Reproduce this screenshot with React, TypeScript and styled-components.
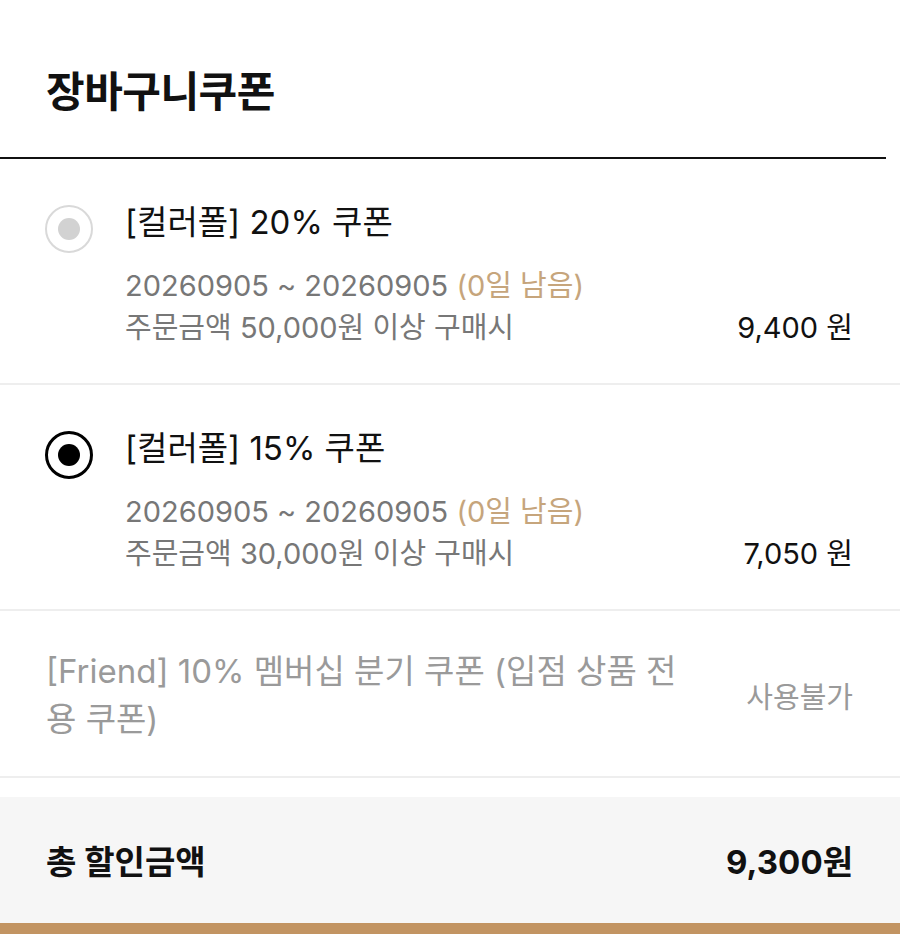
import React from 'react';
import styled, { createGlobalStyle } from 'styled-components';

const GlobalStyle = createGlobalStyle`
    html, body {
        margin: 0;
        padding: 0;
        background: #ffffff;
    }

    body {
        font-family: Inter, 'Noto Sans CJK KR', 'Noto Sans', sans-serif;
        color: #111111;
    }
`;

const Page = styled.div`
    width: 900px;
    height: 934px;
    display: flex;
    flex-direction: column;
    overflow: hidden;
    background: #ffffff;
`;

const Header = styled.header`
    height: 159px;
    display: flex;
    align-items: center;
    padding: 20px 46px 0;
    box-sizing: border-box;
    border-bottom: 2px solid #111111;
    margin-right: 14px;
`;

const Title = styled.h1`
    margin: 0;
    font-family: 'Noto Sans CJK KR', sans-serif;
    font-size: 42px;
    font-weight: 700;
    letter-spacing: -0.5px;
`;

const CouponList = styled.ul`
    list-style: none;
    margin: 0;
    padding: 0;
`;

const CouponItem = styled.li`
    display: grid;
    grid-template-columns: 48px 1fr auto;
    column-gap: 32px;
    padding: 40px 47px 34px 45px;
    border-bottom: 2px solid #eeeeee;
`;

const DisabledItem = styled.li`
    display: grid;
    grid-template-columns: 1fr auto;
    column-gap: 56px;
    align-items: center;
    padding: 36px 47px 33px 46px;
    border-bottom: 2px solid #eeeeee;
`;

const Radio = styled.span<{ $checked: boolean }>`
    width: 48px;
    height: 48px;
    margin-top: 6px;
    box-sizing: border-box;
    border-radius: 50%;
    border: ${({ $checked }) => ($checked ? '3px solid #000000' : '2px solid #d9d9d9')};
    display: flex;
    align-items: center;
    justify-content: center;

    &::after {
        content: '';
        width: 22px;
        height: 22px;
        border-radius: 50%;
        background: ${({ $checked }) => ($checked ? '#000000' : '#d2d2d2')};
    }
`;

const CouponBody = styled.div`
    display: flex;
    flex-direction: column;
`;

const CouponName = styled.div`
    font-size: 33px;
    line-height: 46px;
    color: #111111;
    margin-bottom: 20px;
`;

const Meta = styled.div`
    font-size: 29px;
    line-height: 42px;
    color: #777777;
    white-space: nowrap;
`;

const Remain = styled.span`
    color: #c6a57c;
`;

const Price = styled.div`
    align-self: end;
    font-size: 29px;
    line-height: 42px;
    color: #111111;
    white-space: nowrap;
`;

const DisabledName = styled.div`
    font-size: 33px;
    line-height: 48px;
    color: #9a9a9a;
`;

const DisabledLabel = styled.div`
    font-size: 29px;
    color: #9a9a9a;
    white-space: nowrap;
`;

const Summary = styled.div`
    margin-top: 19px;
    height: 126px;
    background: #f6f6f6;
    display: flex;
    align-items: center;
    justify-content: space-between;
    padding: 0 47px 0 46px;
    font-size: 33px;
    font-weight: 700;
`;

const BottomBar = styled.div`
    flex: 1;
    background: #c29462;
`;

const coupons = [
    { id: 1, name: '[컬러폴] 20% 쿠폰', min: '50,000', price: '9,400', checked: false },
    { id: 2, name: '[컬러폴] 15% 쿠폰', min: '30,000', price: '7,050', checked: true },
];

export default function App() {
    return (
        <Page>
            <GlobalStyle />
            <Header>
                <Title>장바구니쿠폰</Title>
            </Header>
            <CouponList>
                {coupons.map(coupon => (
                    <CouponItem key={coupon.id}>
                        <Radio $checked={coupon.checked} />
                        <CouponBody>
                            <CouponName>{coupon.name}</CouponName>
                            <Meta>
                                20260905 ~ 20260905 <Remain>(0일 남음)</Remain>
                            </Meta>
                            <Meta>주문금액 {coupon.min}원 이상 구매시</Meta>
                        </CouponBody>
                        <Price>{coupon.price} 원</Price>
                    </CouponItem>
                ))}
                <DisabledItem>
                    <DisabledName>[Friend] 10% 멤버십 분기 쿠폰 (입점 상품 전용 쿠폰)</DisabledName>
                    <DisabledLabel>사용불가</DisabledLabel>
                </DisabledItem>
            </CouponList>
            <Summary>
                <span>총 할인금액</span>
                <span>9,300원</span>
            </Summary>
            <BottomBar />
        </Page>
    );
}
